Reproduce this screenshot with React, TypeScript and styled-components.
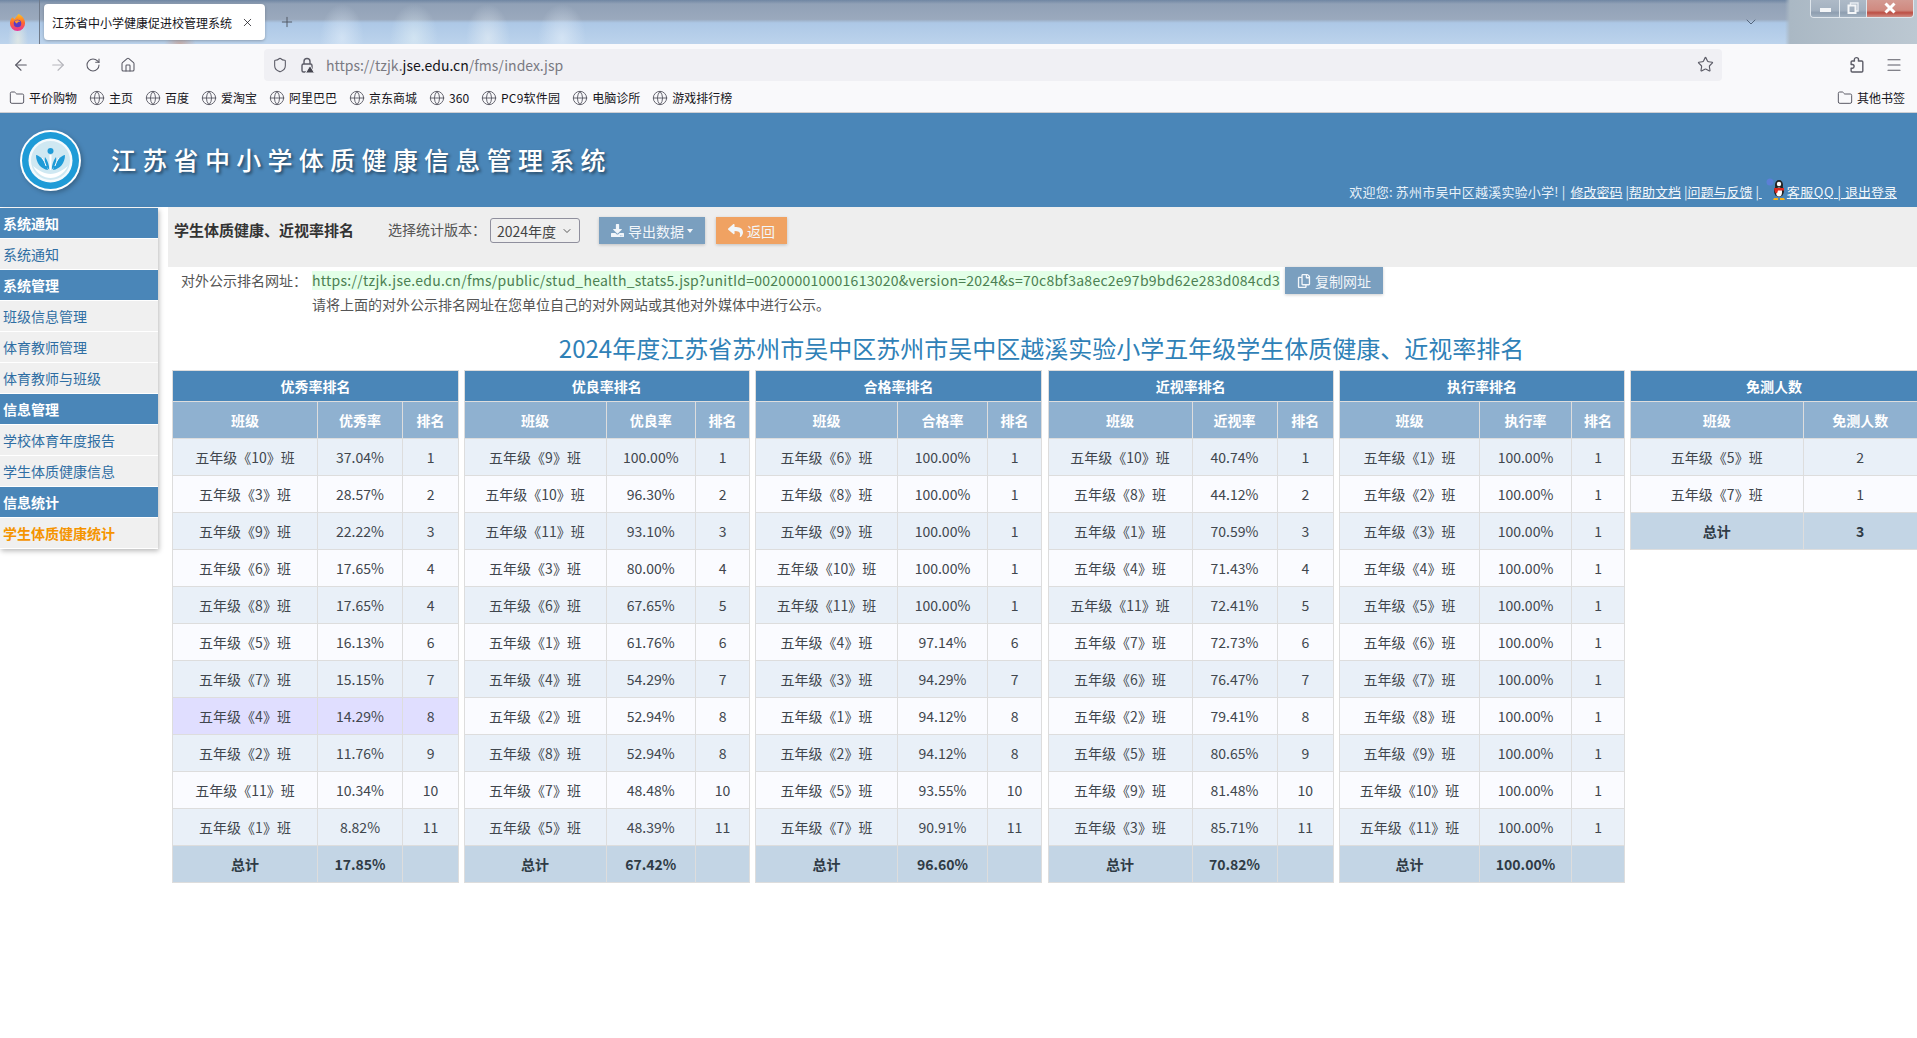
import React from "react";
import styled, { createGlobalStyle } from "styled-components";
import { ArrowLeft, ArrowRight, RotateCw, Home, Shield, Star, Menu, Globe, Folder, X, Plus, ChevronDown } from "lucide-react";
import { FaDownload, FaReply, FaRegCopy } from "react-icons/fa";

const FONT = `"Noto Sans CJK SC", "Liberation Sans", sans-serif`;

const Global = createGlobalStyle`
  html, body { margin: 0; padding: 0; background: #fff; overflow: hidden; }
  body { font-family: ${FONT}; font-size: 14px; color: #333; }
  * { box-sizing: border-box; }
`;

const Page = styled.div`
  width: 1917px;
  height: 1038px;
  display: flex;
  flex-direction: column;
  overflow: hidden;
`;

const TabStrip = styled.div`
  height: 44px;
  display: flex;
  align-items: center;
  padding: 0 0 0 9px;
  position: relative;
  background:
    radial-gradient(ellipse 10px 26px at 18px 40px, rgba(236,238,226,.7), transparent),
    radial-gradient(ellipse 16px 9px at 180px 44px, rgba(214,130,90,.45), transparent),
    radial-gradient(ellipse 22px 34px at 342px 38px, rgba(226,238,250,.6), transparent),
    radial-gradient(ellipse 24px 34px at 414px 38px, rgba(226,240,246,.6), transparent),
    radial-gradient(ellipse 22px 34px at 488px 38px, rgba(232,240,246,.6), transparent),
    radial-gradient(ellipse 24px 34px at 562px 38px, rgba(230,240,250,.6), transparent),
    linear-gradient(90deg, transparent 1785px, #aab8c4 1790px, #bcc8d2 1917px),
    linear-gradient(180deg, rgba(80,110,145,.5) 0, rgba(80,110,145,0) 4px),
    linear-gradient(180deg, #8f9fb5 0, #9aa9bd 44%, #adc8e6 52%, #bcd3ec 100%);
`;

const FirefoxMark = styled.svg`
  width: 17px;
  height: 19px;
  flex: none;
`;

const TabDivider = styled.div`
  width: 1px;
  height: 44px;
  margin: 0 4px 0 13px;
  background: #6f7a8a;
`;

const Tab = styled.div`
  width: 221px;
  height: 36px;
  background: #fff;
  border-radius: 4px;
  box-shadow: 0 1px 3px rgba(0, 0, 0, 0.25);
  display: flex;
  align-items: center;
  justify-content: space-between;
  padding: 0 11px 0 8px;
  font-size: 12px;
  color: #15141a;
`;

const TabAdd = styled.div`
  margin-left: 14px;
  display: flex;
  color: #4f5560;
`;

const TabOverflow = styled.div`
  position: absolute;
  left: 1743px;
  top: 14px;
  display: flex;
  color: #4f5f75;
`;

const WindowButtons = styled.div`
  position: absolute;
  left: 1810px;
  top: 0;
  width: 104px;
  height: 18px;
  display: flex;
  border: 1px solid #dfe6ec;
  border-top: none;
  border-radius: 0 0 4px 4px;
  overflow: hidden;
`;

const WinBtn = styled.div<{ $close?: boolean; $w: number }>`
  width: ${(p) => p.$w}px;
  display: flex;
  align-items: center;
  justify-content: center;
  color: #fff;
  border-right: 1px solid #dfe6ec;
  background: ${(p) =>
    p.$close
      ? "linear-gradient(180deg,#d39a92,#d08a80 60%,#bd4f45 75%,#cf8e86)"
      : "linear-gradient(180deg,#aebac7,#a3b1c0 60%,#8e9eb0 75%,#a3b2c1)"};
  &:last-child { border-right: none; }
`;

const MinGlyph = styled.span`
  width: 11px;
  height: 4px;
  margin-top: 3px;
  background: #f3f5f7;
`;

const WinGlyph = styled.svg`
  width: 12px;
  height: 12px;
  margin-top: -2px;
`;

const NavBar = styled.div`
  height: 37px;
  background: #f9f9fb;
  display: flex;
  align-items: center;
  padding-top: 4px;
`;

const NavIcon = styled.span<{ $x: number; $c?: string }>`
  width: ${(p) => p.$x}px;
  flex: none;
  display: flex;
  justify-content: center;
  color: ${(p) => p.$c || "#5b5b66"};
`;

const UrlBar = styled.div`
  width: 1458px;
  height: 32px;
  margin-left: 121px;
  background: #f0f0f4;
  border-radius: 4px;
  display: flex;
  align-items: center;
  padding-left: 8px;
  font-size: 14px;
  color: #7a7a82;
`;

const UrlIcons = styled.span`
  display: flex;
  gap: 11px;
  width: 54px;
  flex: none;
  color: #5b5b66;
`;

const UrlHost = styled.span`
  color: #15141a;
`;

const UrlStar = styled.span`
  margin-left: auto;
  margin-right: 8px;
  display: flex;
  color: #5b5b66;
`;

const NavRight = styled.div`
  margin-left: 127px;
  display: flex;
  gap: 19px;
  color: #5b5b66;
`;

const BookmarkBar = styled.div`
  height: 32px;
  background: #f9f9fb;
  border-bottom: 1px solid #cfcfd3;
  display: flex;
  align-items: center;
  gap: 12px;
  padding: 2px 12px 0 9px;
  font-size: 12px;
  color: #15141a;
`;

const Bookmark = styled.span<{ $end?: boolean; $wide?: boolean }>`
  display: flex;
  align-items: center;
  gap: 4px;
  margin-left: ${(p) => (p.$end ? "auto" : "0")};
  letter-spacing: ${(p) => (p.$wide ? "0.2px" : "0")};
  svg { color: #5b5b66; }
`;

const Banner = styled.header`
  height: 94px;
  background: #4a86b8;
  display: flex;
  align-items: flex-end;
  justify-content: space-between;
  padding: 0 20px 5px 20px;
  flex: none;
`;

const BrandBlock = styled.div`
  display: flex;
  align-items: center;
  gap: 30px;
  align-self: center;
  margin-top: 3px;
`;

const LogoMark = styled.svg`
  width: 61px;
  height: 61px;
  margin-top: 2px;
  filter: drop-shadow(2px 2px 2px rgba(0, 0, 0, 0.25));
`;

const BrandTitle = styled.h1`
  margin: 0;
  font-size: 25px;
  font-weight: 500;
  letter-spacing: 6.3px;
  color: #fff;
  text-shadow: 2px 2px 3px rgba(0, 0, 0, 0.45);
  line-height: 30px;
`;

const UserLine = styled.div`
  font-size: 13px;
  line-height: 18px;
  margin-bottom: 1px;
  color: #e8f1f9;
  white-space: pre;
  display: flex;
  align-items: center;
`;

const UserName = styled.span`
  margin-right: 2px;
  letter-spacing: 0.2px;
`;

const UserLink = styled.a<{ $wide?: boolean }>`
  color: #f2f7fb;
  text-decoration: underline;
  letter-spacing: ${(p) => (p.$wide ? "0.5px" : "0")};
`;

const QqMark = styled.svg`
  width: 21px;
  height: 22px;
  margin: -6px 0 0 4px;
  flex: none;
`;

const Body = styled.div`
  flex: 1;
  display: flex;
  align-items: flex-start;
  gap: 10px;
  min-height: 0;
`;

const Sidebar = styled.nav`
  width: 158px;
  flex: none;
  margin-top: 1px;
  box-shadow: 1px 2px 5px rgba(0, 0, 0, 0.28);
  display: flex;
  flex-direction: column;
  background: #fff;
`;

const SideHead = styled.div`
  height: 31px;
  line-height: 31px;
  padding-left: 3px;
  background: #4a86b8;
  border-bottom: 1px solid #fff;
  color: #fff;
  font-weight: bold;
  font-size: 14px;
`;

const SideItem = styled.div<{ $active?: boolean }>`
  height: 31px;
  line-height: 31px;
  padding-left: 3px;
  background: #f0f0f0;
  border-bottom: 1px solid #fff;
  font-size: 14px;
  color: ${(p) => (p.$active ? "#f59400" : "#2f6ea3")};
  font-weight: ${(p) => (p.$active ? "bold" : "normal")};
`;

const Content = styled.main`
  flex: 1;
  min-width: 0;
`;

const ToolBar = styled.div`
  height: 60px;
  background: #eeeeee;
  display: flex;
  align-items: flex-start;
  padding: 10px 0 0 6px;
`;

const ToolTitle = styled.h3`
  margin: 0;
  width: 180px;
  font-size: 15px;
  line-height: 25px;
  font-weight: bold;
  color: #333;
  white-space: nowrap;
`;

const ToolLabel = styled.label`
  margin-left: 34px;
  width: 102px;
  line-height: 25px;
  color: #555;
  font-size: 14px;
`;

const SelectWrap = styled.span`
  position: relative;
  width: 90px;
  height: 25px;
  margin-top: 1px;
  display: block;
  svg {
    position: absolute;
    right: 7px;
    top: 7px;
    color: #333;
    pointer-events: none;
  }
`;

const VersionSelect = styled.select`
  width: 90px;
  height: 25px;
  appearance: none;
  border: 1px solid #8f8f9d;
  border-radius: 3px;
  background: #efefef;
  color: #444;
  font-family: ${FONT};
  font-size: 14px;
  padding: 0 0 0 6px;
`;

const ActionButton = styled.button<{ $tone: "blue" | "orange"; $gap?: number }>`
  height: 27px;
  margin-left: ${(p) => p.$gap ?? 0}px;
  padding: 0 12px;
  border: none;
  background: ${(p) => (p.$tone === "orange" ? "#f0a262" : "#7a9fbf")};
  color: #f2f6fa;
  font-family: ${FONT};
  font-size: 14px;
  display: flex;
  align-items: center;
  gap: 4px;
  white-space: nowrap;
  box-shadow: 0 1px 3px rgba(0, 0, 0, 0.2);
`;

const Caret = styled.span`
  width: 0;
  height: 0;
  border-left: 3.5px solid transparent;
  border-right: 3.5px solid transparent;
  border-top: 4px solid #f2f6fa;
  margin-left: -1px;
`;

const PublicRow = styled.div`
  height: 27px;
  display: flex;
  align-items: flex-start;
  padding-left: 13px;
`;

const PublicLabel = styled.span`
  width: 131px;
  flex: none;
  margin-top: 4px;
  line-height: 19px;
  color: #555;
`;

const PublicUrl = styled.a`
  margin-top: 4px;
  height: 19px;
  line-height: 18px;
  width: 968px;
  flex: none;
  background: #e3ffe8;
  color: #4c8052;
  letter-spacing: 0.26px;
  white-space: nowrap;
  overflow: hidden;
  font-size: 14px;
`;

const PublicNote = styled.p`
  margin: 0 0 0 144px;
  line-height: 20px;
  color: #555;
  font-size: 14px;
`;

const ReportTitle = styled.h2`
  margin: 17px 0 0;
  padding-right: 2px;
  font-size: 24px;
  line-height: 34px;
  font-weight: normal;
  color: #2f81b7;
  text-align: center;
  white-space: nowrap;
`;

const TableGrid = styled.div`
  margin-top: 5px;
  padding-left: 4px;
  display: grid;
  grid-template-columns: 285.5px 285.5px 286.5px 285.5px 285px 287px;
  gap: 6px;
  align-items: start;
`;

const RankTable = styled.table`
  width: 100%;
  table-layout: fixed;
  border-collapse: collapse;
  font-size: 14px;
`;

const TitleCell = styled.th`
  height: 31px;
  background: #4a86b8;
  border: 1px solid #ddd;
  color: #fff;
  font-weight: bold;
  padding: 0;
`;

const SubCell = styled.th`
  height: 37px;
  background: #8fb1d0;
  border: 1px solid #ddd;
  color: #fff;
  font-weight: bold;
  padding: 0;
`;

const DataCell = styled.td<{ $kind: "odd" | "even" | "mark" | "total" }>`
  height: 37px;
  border: 1px solid #ddd;
  padding: 0;
  text-align: center;
  color: ${(p) => (p.$kind === "total" ? "#2f3b45" : "#40464d")};
  font-weight: ${(p) => (p.$kind === "total" ? "bold" : "normal")};
  white-space: nowrap;
  background: ${(p) =>
    ({ odd: "#e9f0f8", even: "#fafbff", mark: "#e0deff", total: "#c3d5e5" })[p.$kind]};
`;

type Row = [string, string, string?];
type RankData = {
  title: string;
  metric: string;
  cols: number[];
  rows: Row[];
  total: string;
  mark?: number;
};

const pct = (list: [number, string, number][]): Row[] =>
  list.map(([c, v, r]) => [`五年级《${c}》班`, `${v}%`, String(r)]);

const TABLES: RankData[] = [
  {
    title: "优秀率排名", metric: "优秀率", cols: [145, 85, 56], total: "17.85%", mark: 7,
    rows: pct([[10,"37.04",1],[3,"28.57",2],[9,"22.22",3],[6,"17.65",4],[8,"17.65",4],[5,"16.13",6],[7,"15.15",7],[4,"14.29",8],[2,"11.76",9],[11,"10.34",10],[1,"8.82",11]]),
  },
  {
    title: "优良率排名", metric: "优良率", cols: [142, 89.5, 54], total: "67.42%",
    rows: pct([[9,"100.00",1],[10,"96.30",2],[11,"93.10",3],[3,"80.00",4],[6,"67.65",5],[1,"61.76",6],[4,"54.29",7],[2,"52.94",8],[8,"52.94",8],[7,"48.48",10],[5,"48.39",11]]),
  },
  {
    title: "合格率排名", metric: "合格率", cols: [142, 90, 54], total: "96.60%",
    rows: pct([[6,"100.00",1],[8,"100.00",1],[9,"100.00",1],[10,"100.00",1],[11,"100.00",1],[4,"97.14",6],[3,"94.29",7],[1,"94.12",8],[2,"94.12",8],[5,"93.55",10],[7,"90.91",11]]),
  },
  {
    title: "近视率排名", metric: "近视率", cols: [144, 85, 56.5], total: "70.82%",
    rows: pct([[10,"40.74",1],[8,"44.12",2],[1,"70.59",3],[4,"71.43",4],[11,"72.41",5],[7,"72.73",6],[6,"76.47",7],[2,"79.41",8],[5,"80.65",9],[9,"81.48",10],[3,"85.71",11]]),
  },
  {
    title: "执行率排名", metric: "执行率", cols: [140, 92, 53], total: "100.00%",
    rows: pct([1,2,3,4,5,6,7,8,9,10,11].map((n) => [n, "100.00", 1] as [number, string, number])),
  },
];

function RankBlock({ t }: { t: RankData }) {
  return (
    <RankTable>
      <colgroup>
        {t.cols.map((w, i) => (
          <col key={i} width={w} />
        ))}
      </colgroup>
      <thead>
        <tr><TitleCell colSpan={3}>{t.title}</TitleCell></tr>
        <tr>
          <SubCell>班级</SubCell>
          <SubCell>{t.metric}</SubCell>
          <SubCell>排名</SubCell>
        </tr>
      </thead>
      <tbody>
        {t.rows.map((r, i) => {
          const kind = t.mark === i ? "mark" : i % 2 ? "even" : "odd";
          return (
            <tr key={i}>
              <DataCell $kind={kind}>{r[0]}</DataCell>
              <DataCell $kind={kind}>{r[1]}</DataCell>
              <DataCell $kind={kind}>{r[2]}</DataCell>
            </tr>
          );
        })}
        <tr>
          <DataCell $kind="total">总计</DataCell>
          <DataCell $kind="total">{t.total}</DataCell>
          <DataCell $kind="total" />
        </tr>
      </tbody>
    </RankTable>
  );
}

function ExemptBlock() {
  return (
    <RankTable>
      <colgroup>
        <col width={172.5} />
        <col width={114.5} />
      </colgroup>
      <thead>
        <tr><TitleCell colSpan={2}>免测人数</TitleCell></tr>
        <tr>
          <SubCell>班级</SubCell>
          <SubCell>免测人数</SubCell>
        </tr>
      </thead>
      <tbody>
        <tr><DataCell $kind="odd">五年级《5》班</DataCell><DataCell $kind="odd">2</DataCell></tr>
        <tr><DataCell $kind="even">五年级《7》班</DataCell><DataCell $kind="even">1</DataCell></tr>
        <tr><DataCell $kind="total">总计</DataCell><DataCell $kind="total">3</DataCell></tr>
      </tbody>
    </RankTable>
  );
}

const MARKS = ["平价购物", "主页", "百度", "爱淘宝", "阿里巴巴", "京东商城", "360", "PC9软件园", "电脑诊所", "游戏排行榜"];

const SIDE: [string, string[]][] = [
  ["系统通知", ["系统通知"]],
  ["系统管理", ["班级信息管理", "体育教师管理", "体育教师与班级"]],
  ["信息管理", ["学校体育年度报告", "学生体质健康信息"]],
  ["信息统计", ["学生体质健康统计"]],
];

export default function App() {
  return (
    <Page>
      <Global />
      <TabStrip>
        <FirefoxMark viewBox="0 0 18 20">
          <defs>
            <linearGradient id="ff" x1="0.5" y1="0" x2="0.5" y2="1">
              <stop offset="0" stopColor="#ffc21f" />
              <stop offset="0.5" stopColor="#ff6a2e" />
              <stop offset="1" stopColor="#e6319a" />
            </linearGradient>
          </defs>
          <path d="M10 1c4 2 7 5 7 10a8 8 0 0 1-16 0c0-3 1-5 2.500-6.500L6 6.500C7 4.500 9 3 10 1z" fill="url(#ff)" />
          <circle cx="9" cy="11" r="4" fill="#5a3bc4" />
          <path d="M6 8.500c2-1.500 5-1 6 1-1.500-.5-3 0-3.500 1.500-1 0-2-1-2.500-2.500z" fill="#ff9a2e" />
        </FirefoxMark>
        <TabDivider />
        <Tab>
          江苏省中小学健康促进校管理系统
          <X size={13} strokeWidth={1.4} />
        </Tab>
        <TabAdd><Plus size={16} strokeWidth={1.4} /></TabAdd>
        <TabOverflow><ChevronDown size={16} strokeWidth={1.4} /></TabOverflow>
        <WindowButtons>
          <WinBtn $w={29}><MinGlyph /></WinBtn>
          <WinBtn $w={27}>
            <WinGlyph viewBox="0 0 12 12">
              <path d="M3.500 3V1h7.500v8H9" fill="none" stroke="#e8edf2" strokeWidth="1.400" />
              <rect x="1.500" y="3.500" width="7" height="7.500" fill="none" stroke="#f4f6f8" strokeWidth="2" />
            </WinGlyph>
          </WinBtn>
          <WinBtn $w={46} $close>
            <WinGlyph viewBox="0 0 12 12">
              <path d="M1.500 1.500l9 9M10.500 1.500l-9 9" stroke="#fff" strokeWidth="3" />
            </WinGlyph>
          </WinBtn>
        </WindowButtons>
      </TabStrip>

      <NavBar>
        <NavIcon $x={42}><ArrowLeft size={18} strokeWidth={1.5} /></NavIcon>
        <NavIcon $x={31} $c="#b5b5bb"><ArrowRight size={18} strokeWidth={1.5} /></NavIcon>
        <NavIcon $x={40}><RotateCw size={16} strokeWidth={1.6} /></NavIcon>
        <NavIcon $x={30}><Home size={16} strokeWidth={1.6} /></NavIcon>
        <UrlBar>
          <UrlIcons>
            <Shield size={16} strokeWidth={1.6} />
            <svg width="16" height="16" viewBox="0 0 16 16">
              <path d="M5 7V4.500a3 3 0 0 1 6 0V7" fill="none" stroke="currentColor" strokeWidth="1.400" />
              <rect x="3" y="7" width="10" height="8" rx="1.500" fill="none" stroke="currentColor" strokeWidth="1.400" />
              <path d="M11 8.500l4.500 7.500h-9z" fill="#45454f" stroke="#f0f0f4" strokeWidth="1" />
            </svg>
          </UrlIcons>
          https://tzjk.<UrlHost>jse.edu.cn</UrlHost>/fms/index.jsp
          <UrlStar><Star size={17} strokeWidth={1.6} /></UrlStar>
        </UrlBar>
        <NavRight>
          <svg width="17" height="17" viewBox="0 0 16 16">
            <path d="M7 1.500c1 0 2 1 2 2 0 .5-.2 1-.2 1.200H12c.6 0 1 .4 1 1V14c0 .6-.4 1-1 1H3c-.6 0-1-.4-1-1v-2.500h1.200c1 0 1.600-.8 1.600-1.700S4.200 8 3.200 8H2V5.700c0-.6.4-1 1-1h2.200C5.100 4.400 5 4 5 3.500c0-1 1-2 2-2z" fill="none" stroke="currentColor" strokeWidth="1.300" strokeLinejoin="round" />
          </svg>
          <Menu size={18} strokeWidth={1.5} />
        </NavRight>
      </NavBar>

      <BookmarkBar>
        {MARKS.map((m, i) => (
          <Bookmark key={m} $wide={m.startsWith("PC9")}>
            {i === 0 ? <Folder size={16} strokeWidth={1.5} /> : <Globe size={16} strokeWidth={1.4} />}
            {m}
          </Bookmark>
        ))}
        <Bookmark $end>
          <Folder size={16} strokeWidth={1.5} />
          其他书签
        </Bookmark>
      </BookmarkBar>

      <Banner>
        <BrandBlock>
          <LogoMark viewBox="0 0 61 61">
            <circle cx="30.500" cy="30.500" r="30.500" fill="#fff" />
            <circle cx="30.500" cy="30.500" r="28.500" fill="#1f9bd7" />
            <circle cx="30.500" cy="30.500" r="22" fill="#f4fafd" />
            <circle cx="30.500" cy="30.500" r="19.500" fill="#cfe8f2" />
            <path d="M13 36c4 8 11 12 17.500 12S44 44 48 36c-5 4-11 8-17.500 8S18 40 13 36z" fill="#fff" />
            <circle cx="30.500" cy="21" r="3" fill="#1f9bd7" />
            <path d="M25 27c-1 5 1 10 4.500 13-.5-5-1.500-9-4.500-13zM36 27c1 5-1 10-4.500 13 .5-5 1.500-9 4.500-13z" fill="#1f9bd7" />
            <path d="M30.500 25v15" stroke="#fff" strokeWidth="2" />
            <path d="M16 25c5 1 10 7 12 15-7-1-12-7-12-15zM45 25c-5 1-10 7-12 15 7-1 12-7 12-15z" fill="#1f9bd7" />
            <path d="M22 28c2 2 3 5 4 8M39 28c-2 2-3 5-4 8" stroke="#fff" strokeWidth="1" fill="none" />
          </LogoMark>
          <BrandTitle>江苏省中小学体质健康信息管理系统</BrandTitle>
        </BrandBlock>
        <UserLine>
          <UserName>{"欢迎您: 苏州市吴中区越溪实验小学! | "}</UserName>
          <UserLink>修改密码</UserLink>
          {" |"}
          <UserLink>帮助文档</UserLink>
          {" |"}
          <UserLink>问题与反馈</UserLink>
          {" |"}
          <UserLink>{" "}</UserLink>
          <QqMark viewBox="0 0 21 22">
            <circle cx="4" cy="4" r="3.500" fill="#5b7fd6" />
            <ellipse cx="13" cy="7" rx="4" ry="5" fill="#222" />
            <ellipse cx="13" cy="13" rx="5" ry="6" fill="#222" />
            <ellipse cx="13" cy="14" rx="3" ry="4.500" fill="#fff" />
            <circle cx="13" cy="6" r="2.200" fill="#fff" />
            <path d="M8 10h10v2.500H12l-1 3-2-1z" fill="#e02a20" />
            <path d="M8 20h4v2H7zM14 20h4l1 2h-5z" fill="#f5b21b" />
          </QqMark>
          <UserLink $wide>客服QQ | </UserLink>
          <UserLink>退出登录</UserLink>
        </UserLine>
      </Banner>

      <Body>
        <Sidebar>
          {SIDE.map(([head, items]) => (
            <React.Fragment key={head}>
              <SideHead>{head}</SideHead>
              {items.map((it) => (
                <SideItem key={it} $active={it === "学生体质健康统计"}>{it}</SideItem>
              ))}
            </React.Fragment>
          ))}
        </Sidebar>
        <Content>
          <ToolBar>
            <ToolTitle>学生体质健康、近视率排名</ToolTitle>
            <ToolLabel>选择统计版本：</ToolLabel>
            <SelectWrap>
              <VersionSelect defaultValue="2024年度">
                <option>2024年度</option>
              </VersionSelect>
              <ChevronDown size={12} strokeWidth={1.6} />
            </SelectWrap>
            <ActionButton $tone="blue" $gap={19}>
              <FaDownload size={13} />
              导出数据
              <Caret />
            </ActionButton>
            <ActionButton $tone="orange" $gap={11}>
              <FaReply size={15} />
              返回
            </ActionButton>
          </ToolBar>
          <PublicRow>
            <PublicLabel>对外公示排名网址：</PublicLabel>
            <PublicUrl>https://tzjk.jse.edu.cn/fms/public/stud_health_stats5.jsp?unitId=002000010001613020&amp;version=2024&amp;s=70c8bf3a8ec2e97b9bd62e283d084cd3</PublicUrl>
            <ActionButton $tone="blue" $gap={5}>
              <FaRegCopy size={14} />
              复制网址
            </ActionButton>
          </PublicRow>
          <PublicNote>请将上面的对外公示排名网址在您单位自己的对外网站或其他对外媒体中进行公示。</PublicNote>
          <ReportTitle>2024年度江苏省苏州市吴中区苏州市吴中区越溪实验小学五年级学生体质健康、近视率排名</ReportTitle>
          <TableGrid>
            {TABLES.map((t) => (
              <RankBlock key={t.title} t={t} />
            ))}
            <ExemptBlock />
          </TableGrid>
        </Content>
      </Body>
    </Page>
  );
}
